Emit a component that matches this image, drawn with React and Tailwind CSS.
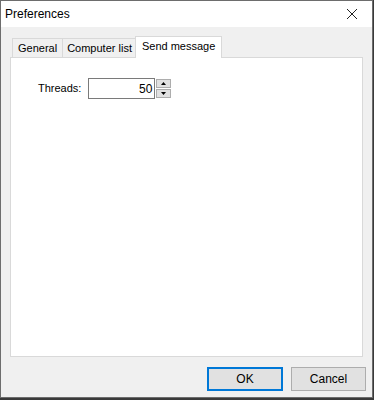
export default function App() {
  return (
    <div className="w-[374px] h-[400px] bg-[#3a3a3a] relative overflow-hidden" style={{ fontFamily: '"Liberation Sans", Arial, sans-serif' }}>
      <div className="absolute left-0 top-0 w-[373px] h-[398px] border border-[#6d6d6d] bg-[#f0f0f0] flex flex-col">
        {/* title bar */}
        <div className="h-[26px] bg-white flex items-center justify-between pl-[4px] shrink-0">
          <span className="text-[12px] text-black">Preferences</span>
          <div className="w-[30px] h-full flex items-center justify-center mr-[5px]">
            <svg width="12" height="12" viewBox="0 0 12 12">
              <path d="M1 1L11 11M11 1L1 11" stroke="#222" strokeWidth="1" />
            </svg>
          </div>
        </div>
        {/* body */}
        <div className="flex-1 flex flex-col px-[9px] pt-[8px]">
          <div className="flex items-end h-[22px] pl-[2px] text-[11px] text-black">
            <div className="h-[19px] px-[5px] border border-b-0 border-[#d9d9d9] bg-[#f0f0f0] flex items-center">General</div>
            <div className="h-[19px] px-[4px] border border-l-0 border-b-0 border-[#d9d9d9] bg-[#f0f0f0] flex items-center">Computer list</div>
            <div className="h-[22px] px-[6px] pb-[2px] border border-b-0 border-[#d9d9d9] bg-white flex items-center -ml-[2px] -mb-[1px] relative z-10">Send message</div>
          </div>
          <div className="h-[300px] bg-white border border-[#d9d9d9] relative">
            <div className="flex items-center pt-[20px] pl-[27px] text-[11px]">
              <span className="mr-[7px]">Threads:</span>
              <div className="w-[67px] h-[21px] border border-[#7a7a7a] bg-white flex items-center justify-end pr-[2px] text-[12px]">50</div>
              <div className="flex flex-col ml-[1px] gap-[1px]">
                <div className="w-[15px] h-[9px] bg-[#e1e1e1] border border-[#adadad] flex items-center justify-center">
                  <svg width="5" height="3" viewBox="0 0 5 3"><path d="M2.5 0L5 3H0Z" fill="#000" /></svg>
                </div>
                <div className="w-[15px] h-[9px] bg-[#e1e1e1] border border-[#adadad] flex items-center justify-center">
                  <svg width="5" height="3" viewBox="0 0 5 3"><path d="M0 0H5L2.5 3Z" fill="#000" /></svg>
                </div>
              </div>
            </div>
          </div>
          <div className="flex justify-end gap-[8px] mt-[10px] -mr-[3px]">
            <button className="w-[76px] h-[24px] bg-[#e1e1e1] border-2 border-[#0078d7] text-[12px] flex items-center justify-center">OK</button>
            <button className="w-[75px] h-[24px] bg-[#e1e1e1] border border-[#adadad] text-[12px] flex items-center justify-center">Cancel</button>
          </div>
        </div>
      </div>
    </div>
  );
}
